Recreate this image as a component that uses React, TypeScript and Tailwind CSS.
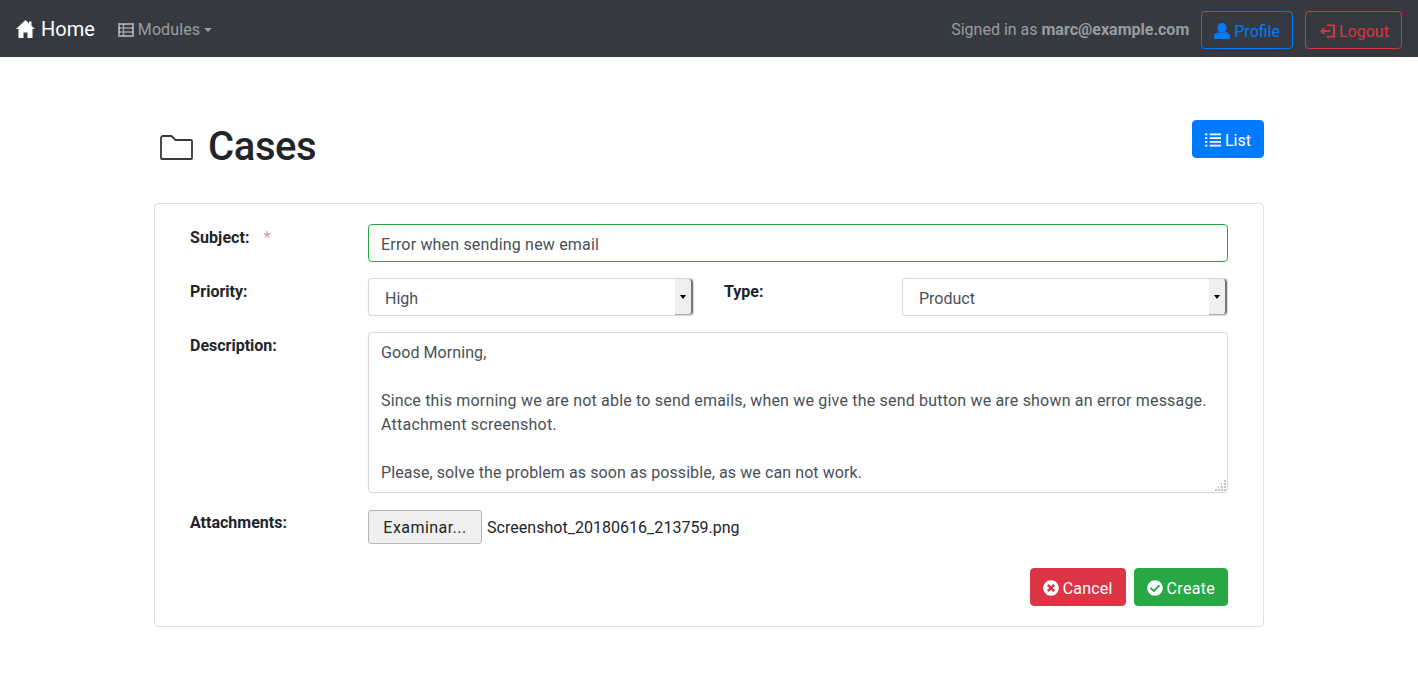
import type { ReactNode } from 'react';
import { FaTimesCircle, FaCheckCircle } from 'react-icons/fa';

const HomeIcon = () => (
  <svg width="19" height="18" viewBox="0 0 19 18" fill="currentColor">
    <path d="M9.5 0 0 9h2.5v9h5v-5.5h4V18h5V9H19l-3.500-3.300V1.500H13v1.900z" />
  </svg>
);

const ModulesIcon = () => (
  <svg width="16" height="14" viewBox="0 0 16 14" fill="none" stroke="currentColor">
    <path strokeWidth="2" d="M1 1h14v12H1z" />
    <path strokeWidth="1.5" d="M1 5h14M1 9h14M5.500 1v12" />
  </svg>
);

const UserIcon = () => (
  <svg width="16" height="16" viewBox="0 0 16 16" fill="currentColor">
    <ellipse cx="8" cy="5" rx="4.500" ry="5" />
    <path d="M0 16v-3c0-2 1.500-3 5-4 1.800 1.300 4.200 1.300 6 0 3.500 1 5 2 5 4v3z" />
  </svg>
);

const LogoutIcon = () => (
  <svg width="15" height="14" viewBox="0 0 16 14" fill="none" stroke="currentColor" strokeWidth="2" className="shrink-0">
    <path d="M7 1h8v12H7" />
    <path d="M11 7H2" />
    <path d="M4.500 4 1.500 7l3 3" />
  </svg>
);

const ListIcon = () => (
  <svg width="16" height="14" viewBox="0 0 17 14" fill="currentColor">
    <path d="M0 0h2.500v2H0zM5 0h12v2H5zM0 4h2.500v2H0zM5 4h12v2H5zM0 8h2.500v2H0zM5 8h12v2H5zM0 12h2.500v2H0zM5 12h12v2H5z" />
  </svg>
);

const FolderIcon = () => (
  <svg width="33" height="25" viewBox="0 0 33 25" fill="none" stroke="#343a40" strokeWidth="1.800" className="ml-[6px] mr-[15px] mt-px">
    <path d="M1 3a2 2 0 0 1 2-2h8.500l4 4H31a1 1 0 0 1 1 1v17a1 1 0 0 1-1 1H2a1 1 0 0 1-1-1z" />
  </svg>
);

const FieldLabel = ({ text, required, className }: { text: string; required?: boolean; className?: string }) => (
  <div className={`w-[178px] shrink-0 font-bold text-[#212529] leading-6 ${className ?? 'pt-[2px]'}`}>
    {text}
    {required && <span className="ml-[14px] font-normal text-[#ee8f98]">*</span>}
  </div>
);

const SelectBox = ({ value }: { value: string }) => (
  <div className="flex h-[38px] w-[326px] items-stretch rounded border border-[#d8dbde] bg-white shadow-[0_0_1px_#ced4da]">
    <span className="flex-1 pt-px pl-4 leading-[38px] text-[#495057]">{value}</span>
    <span className="flex w-[18px] items-center justify-center rounded-r border-r-2 border-b border-r-[#777] border-b-[#aaa] bg-[#eeeff1]">
      <span className="h-0 w-0 border-x-[3px] border-t-[4px] border-x-transparent border-t-black" />
    </span>
  </div>
);

const Btn = ({ icon, label, className }: { icon: ReactNode; label: string; className: string }) => (
  <a className={`flex h-[38px] items-center gap-1 rounded border pt-[2px] ${className}`}>
    {icon}
    <span className="pt-[2px]">{label}</span>
  </a>
);

export default function App() {
  return (
    <div className="min-h-[682px] bg-white font-['Roboto',sans-serif] text-base text-[#212529]">
      <nav className="flex h-[57px] items-center bg-[#343a40] px-4 pt-[2px]">
        <a className="-mt-[2px] flex items-center gap-[6px] text-xl text-white">
          <HomeIcon />
          Home
        </a>
        <a className="ml-[23px] flex items-center gap-1 tracking-[0.1px] text-white/50">
          <ModulesIcon />
          Modules
          <span className="h-0 w-0 border-x-[4.5px] border-t-[4.5px] border-x-transparent border-t-white/50" />
        </a>
        <span className="ml-auto text-white/50">
          Signed in as <b>marc@example.com</b>
        </span>
        <Btn icon={<UserIcon />} label="Profile" className="ml-3 border-[#007bff] px-3 text-[#007bff]" />
        <Btn icon={<LogoutIcon />} label="Logout" className="ml-3 w-[97px] border-[#dc3545] pl-[14px] text-[#dc3545]" />
      </nav>

      <main className="mx-auto w-[1110px] pt-[63px]">
        <div className="flex items-start justify-between">
          <h1 className="flex items-center pt-[3px] text-[40px] leading-[48px] font-medium tracking-[-0.4px]">
            <FolderIcon />
            Cases
          </h1>
          <Btn icon={<ListIcon />} label="List" className="border-[#007bff] bg-[#007bff] px-3 text-white" />
        </div>

        <div className="mt-8 rounded border border-[#dfdfdf] px-[35px] pt-5 pb-5">
          <div className="flex">
            <FieldLabel text="Subject:" required className="pt-[2px] tracking-[0.1px]" />
            <input
              readOnly
              defaultValue="Error when sending new email"
              className="h-[38px] w-[860px] rounded border border-[#28a745] px-3 pt-[2px] tracking-[0.18px] text-[#495057] outline-none"
            />
          </div>

          <div className="mt-4 flex">
            <FieldLabel text="Priority:" />
            <SelectBox value="High" />
            <div className="ml-[30px]">
              <FieldLabel text="Type:" />
            </div>
            <SelectBox value="Product" />
          </div>

          <div className="mt-4 flex">
            <FieldLabel text="Description:" />
            <div className="relative h-[161px] w-[860px] rounded border border-[#d8dbde] px-3 pt-2 pb-[7px] leading-6 text-[#495057] shadow-[0_0_1px_#ced4da]">
              <div className="tracking-[0.08px]">Good Morning,</div>
              <div className="h-6" />
              <div className="tracking-[0.19px]">
                Since this morning we are not able to send emails, when we give the send button we are shown an error message.
              </div>
              <div className="tracking-[0.24px]">Attachment screenshot.</div>
              <div className="h-6" />
              <div className="tracking-[0.09px]">Please, solve the problem as soon as possible, as we can not work.</div>
              <svg className="absolute right-0 bottom-0" width="14" height="14" viewBox="0 0 14 14" fill="#c4c4c4">
                <path d="M11 2h2v2h-2zM8 5h1v2H8zM11 5h2v2h-2zM5 8h1v2H5zM8 8h2v2H8zM11 8h2v2h-2zM2 11h2v2H2zM5 11h2v2H5zM8 11h2v2H8zM11 11h2v2h-2z" />
              </svg>
            </div>
          </div>

          <div className="mt-[17px] flex">
            <FieldLabel text="Attachments:" className="pt-px" />
            <div className="flex items-center">
              <button className="h-[34px] w-[114px] rounded-[3px] border border-[#b5b5b5] bg-[#efefef] pt-[2px] tracking-[0.45px] text-[#212529]">
                Examinar...
              </button>
              <span className="ml-[5px] pt-[2px] tracking-[0.03px] text-[#212529]">Screenshot_20180616_213759.png</span>
            </div>
          </div>

          <div className="mt-6 flex justify-end gap-2">
            <Btn
              icon={<FaTimesCircle size={16} />}
              label="Cancel"
              className="border-[#dc3545] bg-[#dc3545] px-3 tracking-[0.2px] text-white"
            />
            <Btn
              icon={<FaCheckCircle size={16} />}
              label="Create"
              className="border-[#28a745] bg-[#28a745] px-3 tracking-[0.3px] text-white"
            />
          </div>
        </div>
      </main>
    </div>
  );
}
